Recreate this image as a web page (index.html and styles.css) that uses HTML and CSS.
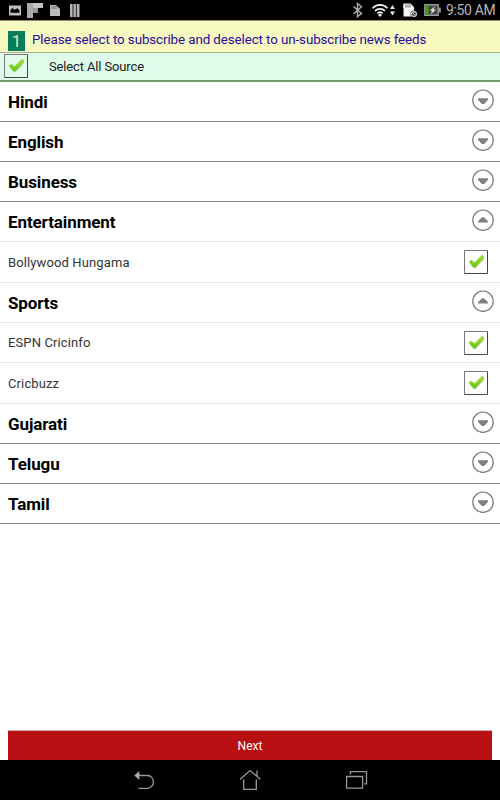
FILE: index.html
```
<!DOCTYPE html>
<html lang="en">
<head>
<meta charset="utf-8">
<title>News feeds</title>
<link rel="stylesheet" href="styles.css">
</head>
<body>
<svg class="defs" aria-hidden="true">
  <defs>
    <linearGradient id="green" x1="0" y1="0" x2="0" y2="1"><stop offset="0" stop-color="#a4df32"/><stop offset="1" stop-color="#65c810"/></linearGradient>
    <symbol id="check" viewBox="0 0 24 24">
      <path d="M.5 23.5V.5h23" fill="none" stroke="#777"/>
      <path d="M.5 23.5h23V.5" fill="none" stroke="#454545"/>
      <path d="M5.4 12.9 7.6 11 10.7 13.4 18.2 6 20.4 7.1 20.2 9.2 11.8 18.2 9.9 18.6Z" fill="#999" opacity=".45"/>
      <path d="M4.8 11.8 7.4 9.7 10.4 12.4 17.9 5 20 5.7 19.8 8.2 11.2 17.4 9.3 17.2Z" fill="url(#green)"/>
    </symbol>
    <symbol id="down" viewBox="0 0 22 22"><circle cx="11" cy="11.2" r="10.2" fill="none" stroke="#777" stroke-width="1.2"/><path d="M6 9.3h10v1.4L12.2 15h-2.4L6 10.7z" fill="#808080"/></symbol>
    <symbol id="up" viewBox="0 0 22 22"><circle cx="11" cy="11.2" r="10.2" fill="none" stroke="#777" stroke-width="1.2"/><path d="M6 13.6v-1.4L10 8.2h2l4 4v1.4z" fill="#808080"/></symbol>
  </defs>
</svg>
<div class="screen">
  <header class="status">
    <svg class="left-icons" width="90" height="20" viewBox="0 0 90 20">
      <path fill="#bdbdbd" fill-rule="evenodd" d="M9 5.5h12v10H9zM10.5 12.8V10l2-2 2 2 1-1h1l1-1 2 2.8v2z"/>
      <path fill="#aaa" d="M27 3h6v15h-6z"/><path fill="#c4c4c4" d="M33 3h10v5H33z"/><path fill="#999" d="M33 8h5v5h-5z"/>
      <path fill="#bdbdbd" d="M50 5h6l4 4v7H50z"/><path d="M52 6v3M54 6v3M56 6v3" stroke="#555" stroke-width=".8"/>
      <path fill="#b5b5b5" d="M70 4h2.6v13H70zM73.4 4h2.5v13h-2.5zM76.7 4h2.8v13h-2.8z"/>
    </svg>
    <svg class="right-icons" width="92" height="20" viewBox="350 0 92 20">
      <path d="m353.5 6.5 8 7-4 3.2V3.5l4 3.2-8 7" fill="none" stroke="#aaa" stroke-width="1.5"/>
      <g fill="none" stroke="#f2f2f2" stroke-width="1.7"><path d="M372.6 8.2a10 10 0 0 1 14.8 0M375 10.9a7 7 0 0 1 10 0M377.3 13.3a4 4 0 0 1 5.4 0"/></g>
      <circle cx="380" cy="15" r="1.6" fill="#f2f2f2"/>
      <path d="m392.5 5 2.5 4h-5zM390 11.5h5l-2.5 4z" fill="#eee"/>
      <path d="M403.5 3.5h7l3.5 3.6V16.5h-10.5V8.2l-.5-.8z" fill="#f5f5f5"/>
      <path d="M406 4.5v3M408 4.5v3M410 4.5v3" stroke="#444" stroke-width=".8"/>
      <circle cx="414" cy="14" r="3.5" fill="#222"/><circle cx="414" cy="14" r="2.4" fill="none" stroke="#ddd" stroke-width="1.1"/><path d="m412.7 12.7 2.6 2.6" stroke="#ddd"/>
      <path d="M424.8 4.8h13.4v10.4h-13.4z" fill="#454545" stroke="#999" stroke-width="1.4"/><path d="M425 5h3.5v10H425z" fill="#4a9a12"/><path d="M439 7.5h1.8v5H439z" fill="#999"/>
      <path d="m435.3 6-5.8 4.7h2.6l-1.5 3.8 5.6-5h-2.8z" fill="#ddd"/>
    </svg>
    <span class="clock">9:50 AM</span>
  </header>
  <section class="notice"><span class="step">1</span><span class="message">Please select to subscribe and deselect to un-subscribe news feeds</span></section>
  <section class="all"><svg class="box"><use href="#check"/></svg><span class="all-label">Select All Source</span></section>
  <main>
    <div class="row group"><span>Hindi</span><svg class="arrow"><use href="#down"/></svg></div>
    <div class="row group"><span>English</span><svg class="arrow"><use href="#down"/></svg></div>
    <div class="row group"><span>Business</span><svg class="arrow"><use href="#down"/></svg></div>
    <div class="row group open"><span>Entertainment</span><svg class="arrow"><use href="#up"/></svg></div>
    <div class="row item tall"><span>Bollywood Hungama</span><svg class="box"><use href="#check"/></svg></div>
    <div class="row group open"><span>Sports</span><svg class="arrow"><use href="#up"/></svg></div>
    <div class="row item"><span>ESPN Cricinfo</span><svg class="box"><use href="#check"/></svg></div>
    <div class="row item tall"><span>Cricbuzz</span><svg class="box"><use href="#check"/></svg></div>
    <div class="row group"><span>Gujarati</span><svg class="arrow"><use href="#down"/></svg></div>
    <div class="row group"><span>Telugu</span><svg class="arrow"><use href="#down"/></svg></div>
    <div class="row group"><span>Tamil</span><svg class="arrow"><use href="#down"/></svg></div>
  </main>
  <button class="next">Next</button>
  <nav class="nav">
    <svg width="24" height="24" viewBox="132 768 24 24"><path d="M138 775.5h9.5a5.8 6.3 0 0 1 0 12.8H138.5" fill="none" stroke="#999" stroke-width="1.3"/><path d="m134.3 775.5 5-4.5v9z" fill="#aaa"/></svg>
    <svg width="24" height="24" viewBox="238 768 24 24"><path d="m240 779.5 10-9 10.4 8.8M243.7 779.5v9.8h12.6v-9.8M257 776.5v-6" fill="none" stroke="#999" stroke-width="1.3"/></svg>
    <svg width="24" height="24" viewBox="344 768 24 24"><path d="M346.6 776.5h16v11.6h-16zM350.5 774.5v-2.8h16v12.1h-2.3" fill="none" stroke="#999" stroke-width="1.3"/></svg>
  </nav>
</div>
</body>
</html>
```
FILE: styles.css
```
* { box-sizing: border-box; }
body { margin: 0; background: #fff; font-family: Roboto, sans-serif; }
svg { display: block; flex: none; }
.defs { position: absolute; width: 0; height: 0; }
.screen { width: 500px; height: 800px; display: flex; flex-direction: column; overflow: hidden; }
.status { height: 20px; flex: none; background: #000; display: flex; align-items: center; }
.right-icons { margin-left: auto; }
.clock { width: 58px; padding-left: 4px; font-size: 14px; letter-spacing: -.35px; line-height: 20px; color: #b5b5b5; white-space: nowrap; }
.notice { height: 33px; flex: none; display: flex; align-items: flex-start; background: #f7fac0; border-top: 1px solid #8e8e6c; border-bottom: 1px solid #a7b28f; color: #2a0a9a; }
.step { width: 17px; height: 20px; margin: 10px 0 0 8px; background: #087d5c; color: #e6edb9; font-size: 16px; line-height: 22px; text-align: center; }
.message { margin: 9px 0 0 7px; font-size: 13.4px; line-height: 19px; letter-spacing: -.11px; white-space: nowrap; }
.all { height: 29px; flex: none; display: flex; align-items: center; padding: 0 0 2px 4px; background: #dffbea; border-bottom: 2px solid #70a070; }
.box { width: 24px; height: 24px; }
.all-label { margin-left: 21px; padding-top: 2px; font-size: 13px; letter-spacing: -.14px; color: #222; }
.row { height: 40px; display: flex; align-items: center; justify-content: space-between; border-bottom: 1px solid #868686; padding-left: 8px; }
.group { font-size: 17px; letter-spacing: -.1px; font-weight: 700; color: #000; }
.group span { padding-top: 1px; }
.open, .item { border-bottom-color: #e3e3e3; }
.item { font-size: 13px; letter-spacing: .12px; color: #333; }
.tall { height: 41px; }
.arrow { width: 22px; height: 22px; margin: 0 6px 3px 0; }
.item .box { margin-right: 12px; }
.next { width: 484px; height: 30px; flex: none; margin: auto 8px 0; border: 0; border-top: 1px solid #d7aaaa; padding: 0; background: #b80f12; color: #fff; font: 12px/28px Roboto, sans-serif; }
.nav { height: 40px; flex: none; background: #000; display: flex; align-items: center; justify-content: center; gap: 82px; }
```
